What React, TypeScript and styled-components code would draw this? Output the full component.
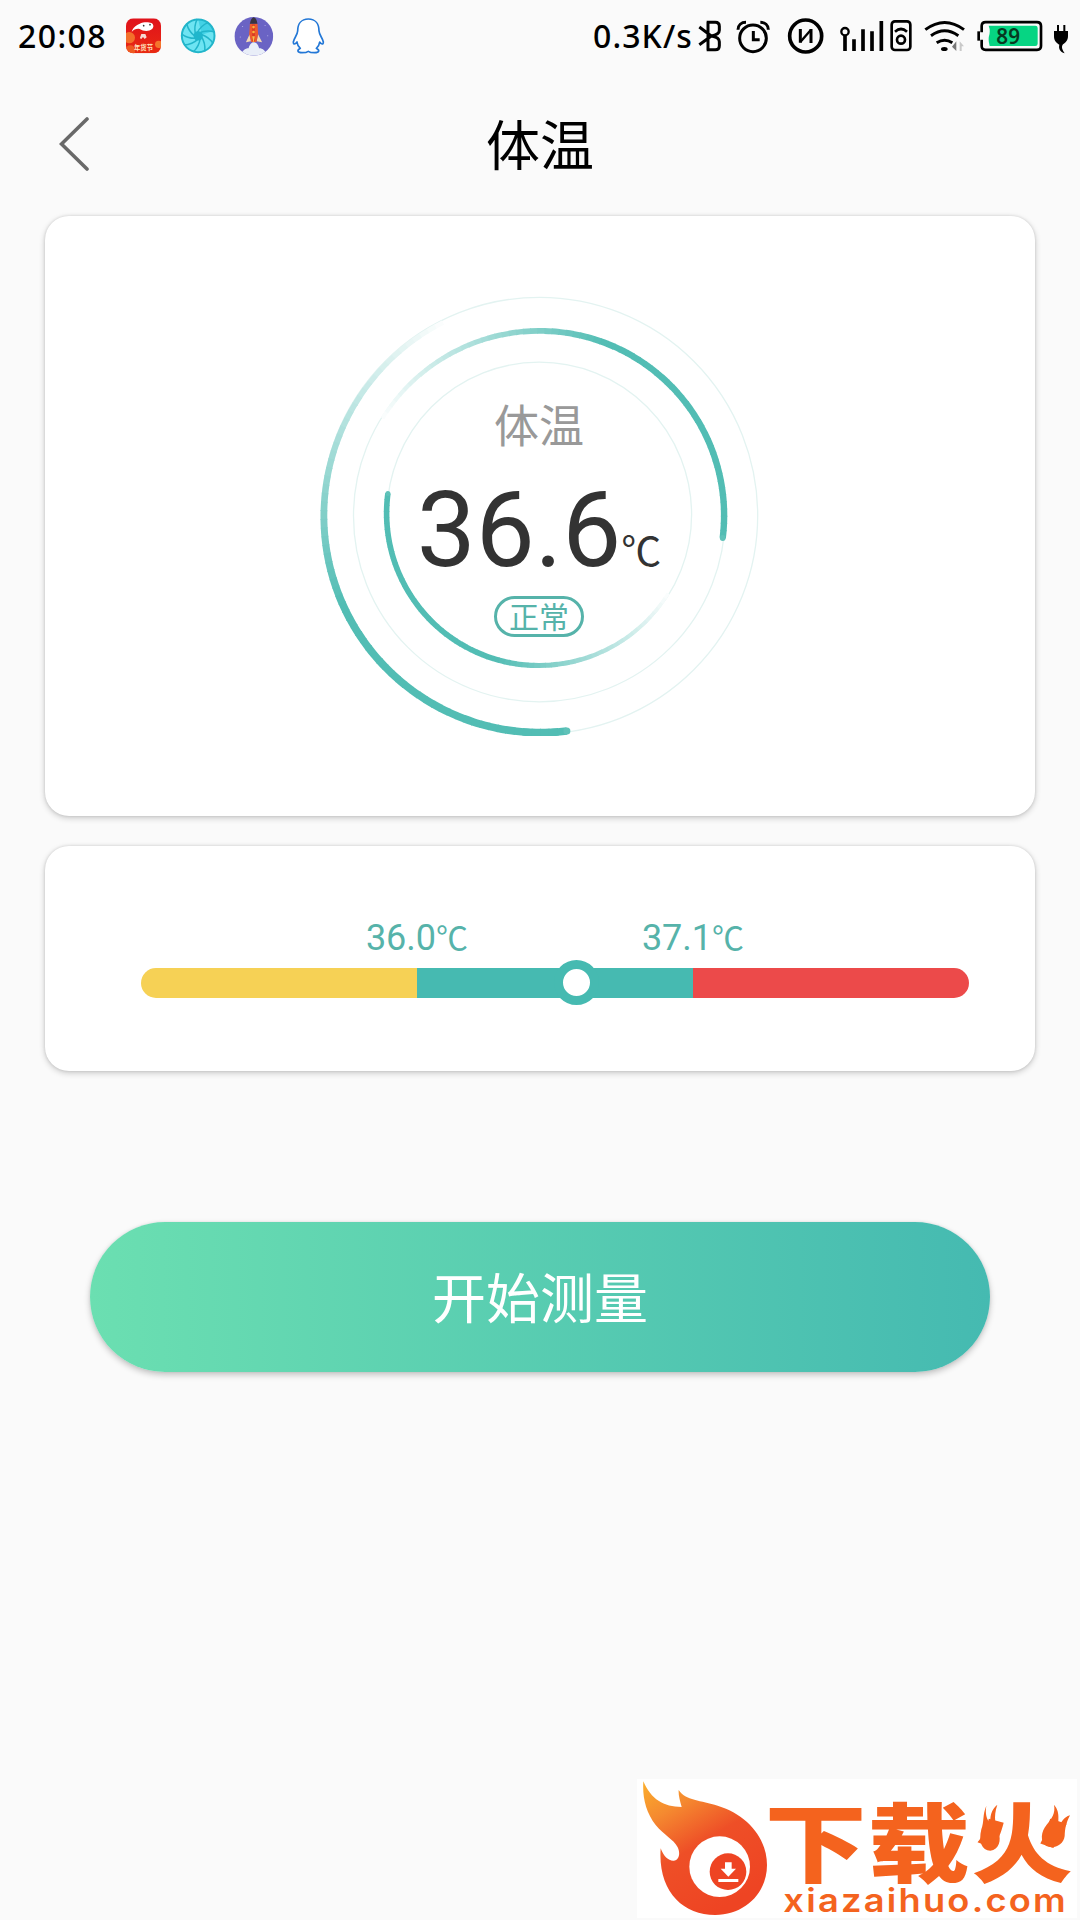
import styled, { createGlobalStyle } from 'styled-components'

const TEAL = '#46bab1'

const polar = (cx: number, cy: number, r: number, deg: number) => {
  const a = (deg * Math.PI) / 180
  return [cx + r * Math.cos(a), cy + r * Math.sin(a)]
}

interface ArcProps {
  cx?: number
  cy?: number
  r: number
  head: number
  fade: number
  tail: number
  width: number
}

// arc that gets thinner and paler from `fade` to `tail`
const FadingArc = ({ cx = 220, cy = 220, r, head, fade, tail, width }: ArcProps) => {
  const steps = 70
  const dir = tail > head ? 1 : -1
  const step = (tail - head) / steps
  const [hx, hy] = polar(cx, cy, r, head)
  const parts = []
  for (let i = steps - 1; i >= 0; i--) {
    const from = head + i * step
    const to = from + step + dir * 0.25
    const t = Math.max(0, (dir * (from - fade)) / (dir * (tail - fade)))
    const k = 1 - t
    const mix = (c: number) => Math.round(255 - (255 - c) * k)
    const [x1, y1] = polar(cx, cy, r, from)
    const [x2, y2] = polar(cx, cy, r, to)
    parts.push(
      <path
        key={i}
        d={`M${x1} ${y1} A${r} ${r} 0 0 ${dir > 0 ? 1 : 0} ${x2} ${y2}`}
        stroke={`rgb(${mix(82)},${mix(189)},${mix(180)})`}
        strokeWidth={width * (0.6 + 0.4 * k)}
      />
    )
  }
  return (
    <g fill="none">
      {parts}
      <circle cx={hx} cy={hy} r={width / 2 - 0.3} fill="#5fc2b9" />
    </g>
  )
}

const Rings = () => (
  <Dial viewBox="0 0 440 440">
    <g fill="none" stroke="#e3f3f1" strokeWidth="1.3">
      <circle cx="219.5" cy="219.5" r="218.2" />
      <circle cx="219.3" cy="220" r="185.8" />
      <circle cx="219.3" cy="218.5" r="152.3" />
    </g>
    <FadingArc cx={220.5} cy={220} r={216.6} head={83} fade={155} tail={243} width={7.6} />
    <FadingArc cx={219.5} cy={219.5} r={184.6} head={7} fade={-68} tail={-148} width={6.4} />
    <FadingArc cx={218.8} cy={217.3} r={152.2} head={187.5} fade={108} tail={32} width={5.6} />
  </Dial>
)

const blades = [0, 40, 80, 120, 160, 200, 240, 280, 320]

const ShopIcon = () => (
  <Icon $w={35} viewBox="378 53 105 108">
    <defs>
      <linearGradient id="shop" x1="0" y1="0" x2="0" y2="1">
        <stop offset="0" stopColor="#e0121b" />
        <stop offset="1" stopColor="#e92a12" />
      </linearGradient>
      <clipPath id="shopClip">
        <rect x="378" y="54" width="105" height="105" rx="22" />
      </clipPath>
    </defs>
    <g clipPath="url(#shopClip)">
      <rect x="378" y="54" width="105" height="105" fill="url(#shop)" />
      <circle cx="388" cy="112" r="17" fill="#f3702b" />
      <circle cx="391" cy="150" r="15" fill="#ef5a21" />
      <circle cx="476" cy="132" r="11" fill="#f4762c" />
      <path d="M395 95C398 84 408 74 418 71C432 64 446 66 454 68C462 72 462 82 455 87C446 94 430 93 419 86C409 84 402 88 395 95Z" fill="#fff" />
      <path d="M424 101h12l4 10-6 5-5-6-6 7-3-5z" fill="#f6d9d2" />
      <circle cx="431" cy="76" r="2.5" fill="#333" />
      <circle cx="450" cy="73" r="2.5" fill="#333" />
      <text x="402" y="149" fontSize="19" fontWeight="700" fill="#ffe3bd">
        年货节
      </text>
    </g>
  </Icon>
)

const ApertureIcon = () => (
  <Icon $w={36} viewBox="541 53 108 108">
    <circle cx="595.5" cy="106.5" r="50" fill="#6ee4f2" />
    <path d="M595.5 57A49 49 0 0 1 642 92L606 103Z" fill="#43d2e6" />
    <circle cx="595.5" cy="106.5" r="49" fill="none" stroke="#22b5ca" strokeWidth="6" />
    {blades.map(a => (
      <path
        key={a}
        d="M592 98Q603 76 626 66"
        transform={`rotate(${a} 595.5 106.5)`}
        fill="none"
        stroke="#22b5ca"
        strokeWidth="4.5"
      />
    ))}
    <circle cx="595.5" cy="106.5" r="14" fill="#1fb6cc" />
  </Icon>
)

const RocketIcon = () => (
  <Icon $w={39} viewBox="704 51 118 108">
    <defs>
      <clipPath id="sky">
        <circle cx="761" cy="106" r="58.5" />
      </clipPath>
    </defs>
    <g clipPath="url(#sky)">
      <rect x="702" y="47" width="118" height="118" fill="#6a63c4" />
      <path d="M722 165C724 150 735 142 745 142C750 128 755 124 761 124C768 124 774 130 777 142C788 142 798 150 800 165Z" fill="#e9eef8" />
      <path d="M749 98L737 124L752 121ZM773 98L786 124L770 121Z" fill="#f3d9b4" />
      <path d="M749 68H772L774 100L769 123H753L747 100Z" fill="#ee5a2c" />
      <path d="M749 68Q752 50 760 48Q769 50 772 68Z" fill="#3a3440" />
      <path d="M756 70h8v50h-8z" fill="#d83a24" />
      <circle cx="760" cy="78" r="4" fill="#f7b53c" />
      <circle cx="760" cy="93" r="4" fill="#f7b53c" />
      <path d="M756 106h8l-4 22z" fill="#f7c04a" />
      <g fill="#b9b6ea">
        <circle cx="727" cy="76" r="1.6" />
        <circle cx="795" cy="73" r="1.6" />
        <circle cx="720" cy="108" r="1.6" />
        <circle cx="803" cy="104" r="1.6" />
      </g>
    </g>
  </Icon>
)

const PenguinIcon = () => (
  <Icon $w={32} viewBox="879 52 96 108">
    <path
      d="M925 55C903 55 893 71 893 91C892 104 882 112 880 124C880 132 885 132 891 124C892 133 896 139 901 143C889 150 893 156 906 156C915 156 921 155 925 152C929 155 935 156 944 156C957 156 961 150 949 143C954 139 958 133 959 124C965 132 970 132 970 124C968 112 958 104 957 91C957 71 947 55 925 55Z"
      fill="#fff"
      stroke="#2277d6"
      strokeWidth="5"
      strokeLinejoin="round"
    />
  </Icon>
)

const BluetoothIcon = () => (
  <Icon $w={23} viewBox="359 54 69 108">
    <path
      d="M360 81L396 108L360 134M386 66V150M382 67H408Q420 67 420 79V91Q420 104 396 108Q420 112 420 125V137Q420 149 408 149H382"
      fill="none"
      stroke="#000"
      strokeWidth="9"
    />
  </Icon>
)

const AlarmIcon = () => (
  <Icon $w={35} $ml={13} viewBox="466 54 105 108">
    <g fill="none" stroke="#000">
      <circle cx="520" cy="115" r="40" strokeWidth="9" />
      <path d="M475 89C475 76 485 67 499 67M566 89C566 76 556 67 542 67" strokeWidth="9" />
      <path d="M521 93V119H540" strokeWidth="9" />
    </g>
  </Icon>
)

const NfcIcon = () => (
  <Icon $w={36} $ml={17} viewBox="622 54 108 108">
    <g fill="none" stroke="#000">
      <circle cx="678" cy="108" r="48" strokeWidth="11" />
      <path d="M662 87V128M694 87V129" strokeWidth="9" />
      <path d="M662 126L694 89" strokeWidth="7" />
    </g>
  </Icon>
)

const SignalIcon = () => (
  <Icon $w={44} $ml={17} viewBox="62 54 132 108">
    <g fill="none" stroke="#000">
      <circle cx="77" cy="95" r="11" strokeWidth="7" />
      <path d="M77 106V153M104 118V153M131 88V153M158 94V153M186 63V153" strokeWidth="11" />
    </g>
  </Icon>
)

const SimIcon = () => (
  <Icon $w={22} $ml={6} viewBox="212 54 66 108">
    <g fill="none" stroke="#000" strokeWidth="8">
      <rect x="217" y="64" width="56" height="86" rx="10" />
      <circle cx="245" cy="119" r="12" />
      <path d="M227 95Q245 79 263 95" />
    </g>
  </Icon>
)

const WifiIcon = () => (
  <Icon $w={41} $ml={12} viewBox="314 54 123 108">
    <g fill="none" stroke="#000" strokeWidth="9">
      <path d="M318 89Q376 46 434 89" />
      <path d="M335 107Q376 78 417 107" />
      <path d="M352 128Q376 113 399 128" />
    </g>
    <ellipse cx="375" cy="147" rx="10" ry="6" />
    <path d="M411 124V153L398 140Z" fill="#777" />
    <path d="M421 153V124L434 139H427V153Z" fill="#c9c9c9" />
  </Icon>
)

const BatteryIcon = () => (
  <Icon $w={66} $ml={12} viewBox="470 54 198 108">
    <path d="M505 77H645Q652 77 652 84V131Q652 138 645 138H508Q503 120 506 108Q511 92 505 77Z" fill="#06d583" />
    <path
      d="M484 97V78Q484 66.500 496 66.500H650Q662 66.500 662 78V138Q662 149.500 650 149.500H496Q484 149.500 484 138V119"
      fill="none"
      stroke="#000"
      strokeWidth="8"
    />
    <path d="M475 94V122" stroke="#000" strokeWidth="8" />
    <BatteryText x="528" y="131">
      89
    </BatteryText>
  </Icon>
)

const PlugIcon = () => (
  <Icon $w={16} $ml={10} viewBox="699 54 48 108">
    <path d="M714 75V96M733 75V96" stroke="#000" strokeWidth="6" />
    <path d="M702 93H744V108C744 122 736 128 729 133C723 140 727 150 734 160C720 156 715 145 718 134C708 128 702 122 702 108Z" />
  </Icon>
)

const Watermark = () => (
  <Logo viewBox="50 57 1320 417">
    <defs>
      <linearGradient id="flame" x1="0" y1="0" x2="0.55" y2="1">
        <stop offset="0" stopColor="#fbae2c" />
        <stop offset="0.25" stopColor="#f58a30" />
        <stop offset="0.55" stopColor="#ee4f27" />
        <stop offset="1" stopColor="#ee4423" />
      </linearGradient>
    </defs>
    <path
      d="M69 64C92 118 130 141 184 141C178 120 174 105 175 90C195 122 243 121 292 137C382 165 440 235 440 315C440 400 373 465 285 465C185 465 112 390 121 265C130 290 145 303 160 302C178 300 180 278 172 262C160 238 130 225 106 195C76 155 66 112 69 64Z"
      fill="url(#flame)"
    />
    <circle cx="298" cy="320" r="91" fill="#fff" />
    <circle cx="323" cy="335" r="55" fill="#ee4423" />
    <path d="M314 307H334V326H347L324 350L301 326H314ZM294 357H354V366H294Z" fill="#fff" />
    <LogoTitle transform="translate(433 347) scale(1 0.85)" textLength="925">
      下载火
    </LogoTitle>
    <g fill="#f4631e">
      <path d="M1098 137C1086 165 1092 185 1083 208C1074 245 1084 272 1110 272C1136 270 1144 240 1134 216C1126 196 1118 172 1131 134C1112 150 1108 170 1111 192C1098 178 1094 160 1098 137Z" />
      <path d="M1301 134C1306 160 1294 176 1279 194C1262 214 1258 244 1278 258C1298 268 1330 256 1333 228C1334 206 1336 192 1349 166C1330 172 1322 186 1318 200C1308 188 1324 160 1301 134Z" />
    </g>
    <LogoUrl x="489" y="455" textLength="854" lengthAdjust="spacingAndGlyphs">
      xiazaihuo.com
    </LogoUrl>
  </Logo>
)

export default function App() {
  return (
    <>
      <GlobalStyle />
      <Page>
        <StatusBar>
          <Clock>20:08</Clock>
          <AppIcons>
            <ShopIcon />
            <ApertureIcon />
            <RocketIcon />
            <PenguinIcon />
          </AppIcons>
          <SystemIcons>
            <Speed>0.3K/s</Speed>
            <BluetoothIcon />
            <AlarmIcon />
            <NfcIcon />
            <SignalIcon />
            <SimIcon />
            <WifiIcon />
            <BatteryIcon />
            <PlugIcon />
          </SystemIcons>
        </StatusBar>
        <Header>
          <Back viewBox="0 0 32 56">
            <path d="M28 3L2.500 28L28 53" />
          </Back>
          <Title>体温</Title>
        </Header>
        <Card $height={600}>
          <Gauge>
            <Rings />
            <Reading>
              <Label>体温</Label>
              <Value>
                <span>36.6</span>
                <Unit>℃</Unit>
              </Value>
              <Badge>正常</Badge>
            </Reading>
          </Gauge>
        </Card>
        <Card $height={225}>
          <Range>
            <RangeLabels>
              <RangeLabel>
                36.0<small>℃</small>
              </RangeLabel>
              <RangeLabel>
                37.1<small>℃</small>
              </RangeLabel>
            </RangeLabels>
            <Bar>
              <Segment $color="#f6d155" />
              <Segment $color={TEAL} />
              <Segment $color="#ec4a4a" />
              <Thumb />
            </Bar>
          </Range>
        </Card>
        <StartButton>开始测量</StartButton>
        <Watermark />
      </Page>
    </>
  )
}

const GlobalStyle = createGlobalStyle`
  body {
    margin: 0;
    background: #fafafa;
    font-family: Roboto, 'Noto Sans CJK SC', sans-serif;
  }
`

const Page = styled.div`
  display: flex;
  flex-direction: column;
  width: 1080px;
  height: 1920px;
  overflow: hidden;
  background: #fafafa;
`

const StatusBar = styled.div`
  display: flex;
  align-items: center;
  height: 72px;
  padding: 0 11px 0 18px;
  flex-shrink: 0;
  color: #000;
  font-family: 'Noto Sans', sans-serif;
  font-size: 32px;
  font-weight: 500;
`

const Clock = styled.div`
  width: 108px;
  padding-bottom: 2px;
  letter-spacing: 1.4px;
`

const AppIcons = styled.div`
  display: flex;
  align-items: center;
  gap: 19px;
`

const SystemIcons = styled.div`
  display: flex;
  align-items: center;
  margin-left: auto;
`

const Speed = styled.div`
  margin-right: 6px;
  padding-bottom: 2px;
  letter-spacing: 1.1px;
`

const Icon = styled.svg<{ $w: number; $ml?: number }>`
  width: ${p => p.$w}px;
  height: 36px;
  margin-left: ${p => p.$ml || 0}px;
  overflow: visible;
  font-family: 'Noto Sans CJK SC', sans-serif;
`

const BatteryText = styled.text`
  font-family: 'Noto Sans', sans-serif;
  font-size: 62px;
  font-weight: 600;
  fill: #06391f;
`

const Header = styled.div`
  display: grid;
  grid-template-columns: 1fr auto 1fr;
  align-items: center;
  height: 144px;
  padding: 0 59px;
  flex-shrink: 0;
`

const Back = styled.svg`
  width: 32px;
  height: 56px;
  fill: none;
  stroke: #696969;
  stroke-width: 3.6;
  stroke-linecap: round;
`

const Title = styled.div`
  padding-top: 8px;
  font-size: 54px;
  line-height: 72px;
  color: #000;
`

const Card = styled.div<{ $height: number }>`
  display: flex;
  justify-content: center;
  align-items: center;
  flex-shrink: 0;
  height: ${p => p.$height}px;
  margin: 0 45px 30px;
  border-radius: 24px;
  background: #fff;
  box-shadow: 0 2px 6px rgba(0, 0, 0, 0.2), 0 0 3px rgba(0, 0, 0, 0.12);
`

const Gauge = styled.div`
  display: grid;
  width: 440px;
  height: 440px;
`

const Dial = styled.svg`
  grid-area: 1 / 1;
  width: 440px;
  height: 440px;
`

const Reading = styled.div`
  grid-area: 1 / 1;
  display: flex;
  flex-direction: column;
  align-items: center;
  padding: 102px 2px 0 0;
`

const Label = styled.div`
  font-size: 45px;
  line-height: 60px;
  color: #999;
`

const Value = styled.div`
  display: flex;
  align-items: baseline;
  height: 120px;
  margin-top: 13px;
  font-size: 105px;
  line-height: 120px;
  color: #333;
`

const Unit = styled.span`
  font-size: 40px;
  line-height: 1;
`

const Badge = styled.div`
  box-sizing: border-box;
  width: 90px;
  height: 41px;
  margin-top: 5px;
  border: 3px solid #56b3aa;
  border-radius: 21px;
  font-size: 30px;
  line-height: 37px;
  text-align: center;
  color: #56b3aa;
`

const Range = styled.div`
  width: 828px;
  margin-left: 30px;
  padding-bottom: 2px;
`

const RangeLabels = styled.div`
  display: grid;
  grid-template-columns: 1fr 1fr;
  padding: 0 138px;
  margin-bottom: 9px;
`

const RangeLabel = styled.div`
  height: 42px;
  font-size: 36px;
  line-height: 42px;
  text-align: center;
  color: #56b3aa;

  small {
    font-size: 32px;
    line-height: 1;
  }
`

const Bar = styled.div`
  position: relative;
  display: flex;
  height: 30px;
`

const Segment = styled.div<{ $color: string }>`
  flex: 1;
  background: ${p => p.$color};

  &:first-child {
    border-radius: 15px 0 0 15px;
  }

  &:nth-child(3) {
    border-radius: 0 15px 15px 0;
  }
`

const Thumb = styled.div`
  position: absolute;
  box-sizing: border-box;
  top: -8px;
  left: 413px;
  width: 45px;
  height: 45px;
  border: 9px solid ${TEAL};
  border-radius: 50%;
  background: #fff;
`

const StartButton = styled.button`
  flex-shrink: 0;
  height: 150px;
  margin: 121px 90px 0;
  padding: 0 0 4px;
  border: 0;
  border-radius: 75px;
  background: linear-gradient(90deg, #6bdfb1, #45bab1);
  box-shadow: 0 3px 6px rgba(0, 0, 0, 0.22), 0 0 3px rgba(0, 0, 0, 0.08);
  font-family: inherit;
  font-size: 54px;
  color: #fff;
`

const Logo = styled.svg`
  width: 440px;
  height: 139px;
  margin: auto 3px 2px auto;
  flex-shrink: 0;
  overflow: visible;
  background: #fff;
`

const LogoTitle = styled.text`
  font-family: 'Noto Sans CJK SC', sans-serif;
  font-size: 305px;
  font-weight: 900;
  fill: #f4631e;
`

const LogoUrl = styled.text`
  font-family: Inter, sans-serif;
  font-size: 98px;
  font-weight: 600;
  letter-spacing: 6px;
  fill: #f4631e;
`
